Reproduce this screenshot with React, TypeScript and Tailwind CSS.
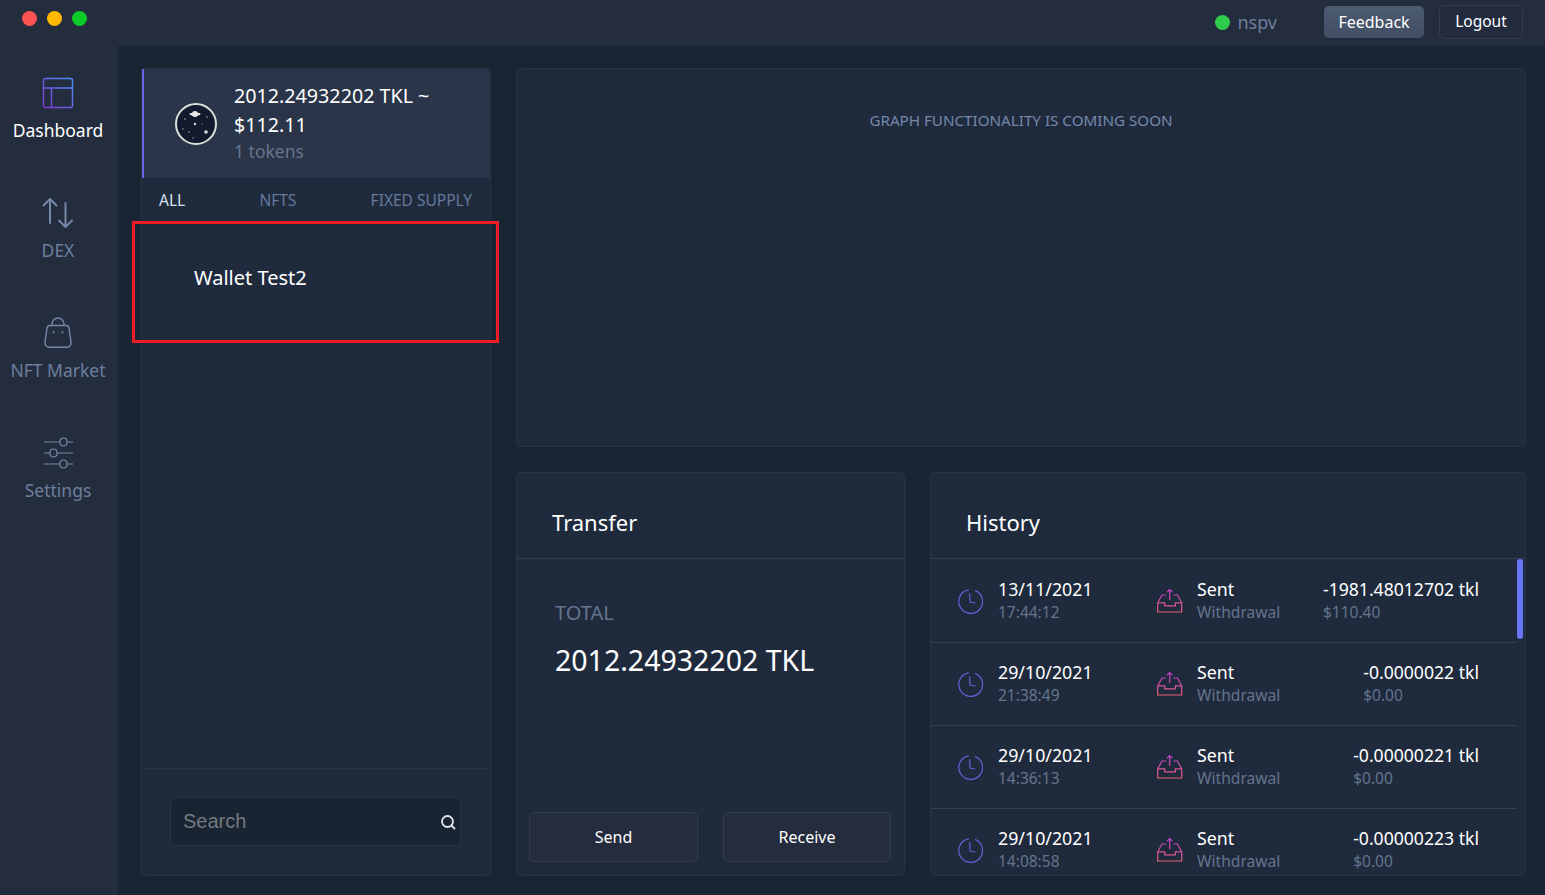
import React from 'react';

const font = { fontFamily: '"Noto Sans", sans-serif' };

const transactions = [
    { date: '13/11/2021', time: '17:44:12', amount: '-1981.48012702 tkl', usd: '$110.40' },
    { date: '29/10/2021', time: '21:38:49', amount: '-0.0000022 tkl', usd: '$0.00' },
    { date: '29/10/2021', time: '14:36:13', amount: '-0.00000221 tkl', usd: '$0.00' },
    { date: '29/10/2021', time: '14:08:58', amount: '-0.00000223 tkl', usd: '$0.00' },
];

const DashboardIcon = () => (
    <svg width="32" height="32" viewBox="0 0 32 32" fill="none">
        <defs>
            <linearGradient id="dash" gradientUnits="userSpaceOnUse" x1="2" y1="30" x2="30" y2="2">
                <stop offset="0" stopColor="#8038d8" />
                <stop offset="1" stopColor="#4a90ff" />
            </linearGradient>
        </defs>
        <path
            d="M3.5 1.5h25a2 2 0 0 1 2 2v25a2 2 0 0 1-2 2h-25a2 2 0 0 1-2-2v-25a2 2 0 0 1 2-2zM1.500 11h29M9.500 11v19.500"
            stroke="url(#dash)"
            strokeWidth="1.4"
        />
    </svg>
);

const ArrowsIcon = () => (
    <svg width="32" height="32" viewBox="0 0 32 32" fill="none" stroke="#7688a8" strokeWidth="2" strokeLinecap="round" strokeLinejoin="round">
        <path d="M8 26V2M1.500 8.500L8 2l6.500 6.500" />
        <path d="M23.500 6v24M17 23.500l6.500 6.500 6.500-6.500" />
    </svg>
);

const BagIcon = () => (
    <svg width="32" height="32" viewBox="0 0 32 32" fill="none" stroke="#7688a8" strokeWidth="1.4" strokeLinecap="round" strokeLinejoin="round">
        <path d="M8 8.500h16c1.500 0 2.800 1.200 3 2.700l2 14c.4 2.700-1.500 5-4.200 5H7.200c-2.700 0-4.600-2.300-4.200-5l2-14c.2-1.500 1.500-2.700 3-2.700z" />
        <path d="M10 8.500V7a6 6 0 0 1 12 0v1.500" />
        <circle cx="11.500" cy="15.300" r=".4" fill="#7688a8" />
        <circle cx="20.500" cy="15.300" r=".4" fill="#7688a8" />
    </svg>
);

const SlidersIcon = () => (
    <svg width="32" height="32" viewBox="0 0 32 32" fill="none" stroke="#7688a8" strokeWidth="1.2">
        <path d="M2 5h16M25 5h6M2 16h6M15 16h16M2 27h16M25 27h6" />
        <rect x="18" y="1" width="7" height="8" rx="3.500" />
        <rect x="8" y="12" width="7" height="8" rx="3.500" />
        <rect x="18" y="23" width="7" height="8" rx="3.500" />
    </svg>
);

const ClockIcon = () => (
    <svg width="25" height="25" viewBox="0 0 25 25" fill="none" stroke="#5e63d8" strokeWidth="1.2" strokeLinecap="round" strokeLinejoin="round">
        <path d="M10.500 .8A11.900 11.900 0 1 0 17.500 1.600" />
        <path d="M11.700 4.500L12 13l5 1" />
    </svg>
);

const OutboxIcon = ({ id }: { id: string }) => (
    <svg width="26" height="26" viewBox="0 0 26 26" fill="none">
        <defs>
            <linearGradient id={id} gradientUnits="userSpaceOnUse" x1="0" y1="1" x2="0" y2="25">
                <stop offset="0" stopColor="#c040d0" />
                <stop offset="1" stopColor="#e8606e" />
            </linearGradient>
        </defs>
        <path
            d="M12.700 12V1.500M10 4.200l2.700-2.700 2.700 2.700M9 7H5L.7 14.800V24h24v-9.200L20.400 7h-3.900M.7 14.800h7v3h10.700v-3h6.300"
            stroke={`url(#${id})`}
            strokeWidth="1.2"
        />
    </svg>
);

const Coin = () => (
    <svg className="shrink-0" width="44" height="44" viewBox="0 0 44 44">
        <circle cx="22" cy="22" r="20" fill="#141a2e" stroke="#dcdcdc" strokeWidth="2" />
        <ellipse cx="21" cy="12" rx="5.500" ry="1.500" fill="#e8e8e8" />
        <circle cx="21" cy="12" r="3" fill="#e8e8e8" />
        <circle cx="21" cy="22" r="1.200" fill="#ddd" />
        <circle cx="32" cy="30" r="1.800" fill="#ddd" />
        <circle cx="11" cy="17" r=".7" fill="#ccc" />
        <circle cx="9" cy="27" r=".7" fill="#aaa" />
        <circle cx="15" cy="30" r=".7" fill="#ccc" />
        <circle cx="33" cy="15" r=".7" fill="#ccc" />
        <circle cx="19" cy="36" r=".8" fill="#999" />
        <circle cx="28" cy="22" r=".6" fill="#aaa" />
    </svg>
);

const navItems = [
    { label: 'Dashboard', icon: <DashboardIcon />, active: true },
    { label: 'DEX', icon: <ArrowsIcon />, active: false },
    { label: 'NFT Market', icon: <BagIcon />, active: false },
    { label: 'Settings', icon: <SlidersIcon />, active: false },
];

const App: React.FC = () => {
    return (
        <div className="h-screen w-full flex flex-col overflow-hidden bg-[#1a2534] text-white" style={font}>
            {/* title bar */}
            <header className="h-[46px] flex items-start justify-between bg-[#242d3d] shrink-0">
                <div className="flex gap-[10px] pl-[22px] pt-[11px]">
                    <span className="w-[15px] h-[15px] rounded-full bg-[#ff5252]" />
                    <span className="w-[15px] h-[15px] rounded-full bg-[#ffb900]" />
                    <span className="w-[15px] h-[15px] rounded-full bg-[#0ccb29]" />
                </div>
                <div className="flex items-center pt-[5px] pr-[22px]">
                    <span className="w-[15px] h-[15px] rounded-full bg-[#2ecc4a]" />
                    <span className="ml-[7px] text-[18px] leading-[24px] text-[#6b7f9e]">nspv</span>
                    <button className="ml-[47px] w-[100px] h-[32px] rounded-[5px] text-[16px] bg-gradient-to-b from-[#4d5b70] to-[#414e63]">Feedback</button>
                    <button className="ml-[15px] w-[84px] h-[34px] rounded-[5px] text-[15.500px] border border-[#323c50] bg-[#232c3e]">Logout</button>
                </div>
            </header>

            <div className="flex-1 flex min-h-0">
                {/* sidebar */}
                <nav className="w-[118px] shrink-0 bg-[#242d3d] flex flex-col items-center pt-[31px] pr-[2px] gap-[58px]">
                    {navItems.map((item) => (
                        <div key={item.label} className="flex flex-col items-center h-[62px]">
                            <div className="w-[32px] h-[32px]">{item.icon}</div>
                            <span className={`mt-[8px] text-[17.500px] leading-[26px] whitespace-nowrap ${item.active ? 'text-white' : 'text-[#6b7f9e]'}`}>{item.label}</span>
                        </div>
                    ))}
                </nav>

                <main className="flex-1 flex min-w-0 pt-[22px] pl-[23px] pr-[19px] pb-[19px] gap-[25px]">
                    {/* wallet column */}
                    <section className="w-[350px] shrink-0 flex flex-col rounded-[5px] border border-[#263346] bg-[#1f2b3d]">
                        <div className="h-[109px] flex items-center bg-[#2a3549] border-l-2 border-[#6a62e8] rounded-tr-[5px] pl-[30px] pr-[20px] shrink-0">
                            <Coin />
                            <div className="ml-[16px] pb-[3px]">
                                <div className="text-[19.700px] leading-[29px]">2012.24932202 TKL ~ $112.11</div>
                                <div className="text-[17.500px] leading-[24px] text-[#64748d]">1 tokens</div>
                            </div>
                        </div>
                        <div className="h-[43px] flex items-center justify-between pl-[17px] pr-[18px] pt-[2px] text-[15.500px] text-[#64799c] shrink-0">
                            <span className="text-[#d9e1ec]">ALL</span>
                            <span>NFTS</span>
                            <span>FIXED SUPPLY</span>
                        </div>
                        <div className="relative flex-1 min-h-0">
                            <div className="pl-[52px] pt-[43px] text-[20px] leading-[28px]">Wallet Test2</div>
                            {/* red annotation over the first row */}
                            <div className="absolute left-[-10px] top-0 w-[367px] h-[122px] border-[3px] border-[#ee1c25]" />
                        </div>
                        <div className="h-[107px] shrink-0 border-t border-[#263346] pl-[28px] pt-[28px]">
                            <div className="w-[291px] h-[49px] flex items-center justify-between rounded-[5px] border border-[#263346] bg-[#192433] pl-[12px] pr-[4px] pb-[2px]">
                                <span className="text-[20px] text-[#74797f]" style={{ fontFamily: '"Liberation Sans", sans-serif' }}>Search</span>
                                <svg className="mt-[2px]" width="16" height="16" viewBox="0 0 16 16" fill="none" stroke="#dfe5ec" strokeWidth="1.800" strokeLinecap="round">
                                    <circle cx="7.500" cy="7.500" r="5.500" />
                                    <path d="M12 12l2.500 2.500" />
                                </svg>
                            </div>
                        </div>
                    </section>

                    <div className="flex-1 min-w-0 flex flex-col gap-[25px]">
                        {/* graph */}
                        <section className="h-[379px] shrink-0 rounded-[5px] border border-[#263346] bg-[#1f2b3d] pt-[39px] text-center text-[15.200px] leading-[24px] text-[#7488ab]">
                            GRAPH FUNCTIONALITY IS COMING SOON
                        </section>

                        <div className="flex-1 min-h-0 flex gap-[25px]">
                            {/* transfer */}
                            <section className="w-[389px] shrink-0 flex flex-col rounded-[5px] border border-[#263346] bg-[#1f2b3d]">
                                <h2 className="h-[86px] shrink-0 flex items-center pl-[35px] pt-[14px] text-[22px] border-b border-[#334054]">Transfer</h2>
                                <div className="flex-1 pl-[38px] pt-[39px]">
                                    <div className="text-[20px] leading-[30px] text-[#64748d]">TOTAL</div>
                                    <div className="mt-[13px] text-[28.500px] leading-[38px]">2012.24932202 TKL</div>
                                </div>
                                <div className="flex justify-between pl-[12px] pr-[13px] pb-[13px]">
                                    <button className="w-[169px] h-[50px] rounded-[5px] text-[16px] border border-[#323c50] bg-[#242c3e]">Send</button>
                                    <button className="w-[168px] h-[50px] rounded-[5px] text-[16px] border border-[#323c50] bg-[#242c3e]">Receive</button>
                                </div>
                            </section>

                            {/* history */}
                            <section className="flex-1 min-w-0 flex flex-col rounded-[5px] border border-[#263346] bg-[#1f2b3d] overflow-hidden">
                                <h2 className="h-[86px] shrink-0 flex items-center pl-[35px] pt-[14px] text-[22px] border-b border-[#334054]">History</h2>
                                <div className="relative flex-1 min-h-0 overflow-hidden pt-[1px]">
                                    {transactions.map((tx, i) => (
                                        <div key={i} className="mr-[8px] h-[83.150px] flex items-center border-b border-[#334054]">
                                            <div className="ml-[27px] shrink-0"><ClockIcon /></div>
                                            <div className="ml-[15px] w-[159px] shrink-0">
                                                <div className="text-[17.800px] leading-[23px]">{tx.date}</div>
                                                <div className="text-[15.500px] leading-[23px] text-[#64748d]">{tx.time}</div>
                                            </div>
                                            <OutboxIcon id={`outbox-${i}`} />
                                            <div className="ml-[14px]">
                                                <div className="text-[17.800px] leading-[23px]">Sent</div>
                                                <div className="text-[15.600px] leading-[23px] text-[#64748d]">Withdrawal</div>
                                            </div>
                                            <div className="ml-auto mr-[38px]">
                                                <div className="text-[17.600px] leading-[23px]">{tx.amount}</div>
                                                <div className="text-[15.500px] leading-[23px] text-[#64748d]">{tx.usd}</div>
                                            </div>
                                        </div>
                                    ))}
                                    <div className="absolute right-[2px] top-0 w-[6px] h-[80px] rounded-[3px] bg-[#6876f8]" />
                                </div>
                            </section>
                        </div>
                    </div>
                </main>
            </div>
        </div>
    );
};

export default App;
